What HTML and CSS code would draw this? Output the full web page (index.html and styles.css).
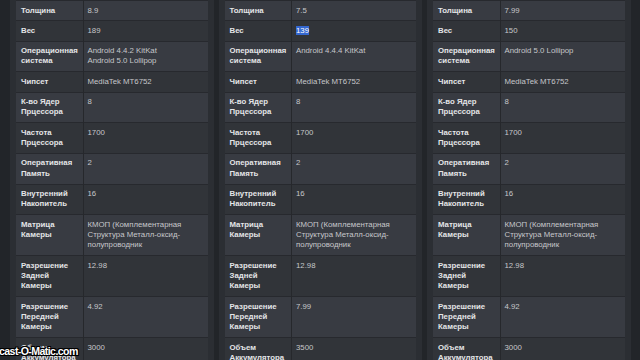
FILE: index.html
```html
<!DOCTYPE html>
<html lang="ru">
<head>
<meta charset="utf-8">
<title>Сравнение</title>
<link rel="stylesheet" href="styles.css">
</head>
<body>
<main class="page">
  <section class="col">
    <table class="spec">
      <tr><th>Толщина</th><td>8.9</td></tr>
      <tr><th>Вес</th><td>189</td></tr>
      <tr><th>Операционная<br>система</th><td>Android 4.4.2 KitKat<br>Android 5.0 Lollipop</td></tr>
      <tr><th>Чипсет</th><td>MediaTek MT6752</td></tr>
      <tr><th>К-во Ядер<br>Прцессора</th><td>8</td></tr>
      <tr><th>Частота<br>Прцессора</th><td>1700</td></tr>
      <tr><th>Оперативная<br>Память</th><td>2</td></tr>
      <tr><th>Внутренний<br>Накопитель</th><td>16</td></tr>
      <tr><th>Матрица<br>Камеры</th><td>КМОП (Комплементарная<br>Структура Металл-оксид-<br>полупроводник</td></tr>
      <tr><th>Разрешение<br>Задней<br>Камеры</th><td>12.98</td></tr>
      <tr><th>Разрешение<br>Передней<br>Камеры</th><td>4.92</td></tr>
      <tr><th>Объем<br>Аккумулятора</th><td>3000</td></tr>
    </table>
  </section>
  <section class="col">
    <table class="spec">
      <tr><th>Толщина</th><td>7.5</td></tr>
      <tr><th>Вес</th><td><span class="sel">139</span></td></tr>
      <tr><th>Операционная<br>система</th><td>Android 4.4.4 KitKat</td></tr>
      <tr><th>Чипсет</th><td>MediaTek MT6752</td></tr>
      <tr><th>К-во Ядер<br>Прцессора</th><td>8</td></tr>
      <tr><th>Частота<br>Прцессора</th><td>1700</td></tr>
      <tr><th>Оперативная<br>Память</th><td>2</td></tr>
      <tr><th>Внутренний<br>Накопитель</th><td>16</td></tr>
      <tr><th>Матрица<br>Камеры</th><td>КМОП (Комплементарная<br>Структура Металл-оксид-<br>полупроводник</td></tr>
      <tr><th>Разрешение<br>Задней<br>Камеры</th><td>12.98</td></tr>
      <tr><th>Разрешение<br>Передней<br>Камеры</th><td>7.99</td></tr>
      <tr><th>Объем<br>Аккумулятора</th><td>3500</td></tr>
    </table>
  </section>
  <section class="col">
    <table class="spec">
      <tr><th>Толщина</th><td>7.99</td></tr>
      <tr><th>Вес</th><td>150</td></tr>
      <tr><th>Операционная<br>система</th><td>Android 5.0 Lollipop</td></tr>
      <tr><th>Чипсет</th><td>MediaTek MT6752</td></tr>
      <tr><th>К-во Ядер<br>Прцессора</th><td>8</td></tr>
      <tr><th>Частота<br>Прцессора</th><td>1700</td></tr>
      <tr><th>Оперативная<br>Память</th><td>2</td></tr>
      <tr><th>Внутренний<br>Накопитель</th><td>16</td></tr>
      <tr><th>Матрица<br>Камеры</th><td>КМОП (Комплементарная<br>Структура Металл-оксид-<br>полупроводник</td></tr>
      <tr><th>Разрешение<br>Задней<br>Камеры</th><td>12.98</td></tr>
      <tr><th>Разрешение<br>Передней<br>Камеры</th><td>4.92</td></tr>
      <tr><th>Объем<br>Аккумулятора</th><td>3000</td></tr>
    </table>
  </section>
  <div class="watermark">cast-O-Matic.com</div>
</main>
</body>
</html>
```

FILE: styles.css
```css
* { box-sizing: border-box; }

html, body {
  margin: 0;
  padding: 0;
  width: 640px;
  height: 360px;
  overflow: hidden;
  background: #222529;
}

.page {
  position: relative;
  display: grid;
  grid-template-columns: repeat(3, 203.5px);
  column-gap: 5px;
  padding-left: 10px;
  height: 360px;
  font-family: "Liberation Sans", Arial, sans-serif;
  font-size: 7.8px;
  line-height: 10.33px;
}

.col {
  background: #2b2e33;
  padding: 0 6px;
}

.spec {
  width: 100%;
  border-collapse: collapse;
  table-layout: fixed;
}

.spec tr {
  background: #313439;
}

.spec tr:nth-child(odd) {
  background: #383b42;
}

.spec th,
.spec td {
  border-top: 1px solid #27292e;
  vertical-align: top;
  text-align: left;
  padding: 4.5px 4px 4.5px 4px;
}

.spec th {
  width: 67px;
  padding-left: 5px;
  font-weight: bold;
  color: #e4e5e7;
  border-right: 1px solid #26282c;
}

.spec td {
  color: #c6c7ca;
}

.sel {
  background: #3467cf;
  color: #ffffff;
}

.watermark {
  position: absolute;
  left: -1px;
  top: 344px;
  font-family: "Liberation Sans", Arial, sans-serif;
  font-weight: bold;
  font-size: 10.6px;
  line-height: 14px;
  letter-spacing: -0.6px;
  color: #ffffff;
  text-shadow:
    1px 0 0 #000, -1px 0 0 #000, 0 1px 0 #000, 0 -1px 0 #000,
    1px 1px 0 #000, -1px -1px 0 #000, 1px -1px 0 #000, -1px 1px 0 #000;
}
```
